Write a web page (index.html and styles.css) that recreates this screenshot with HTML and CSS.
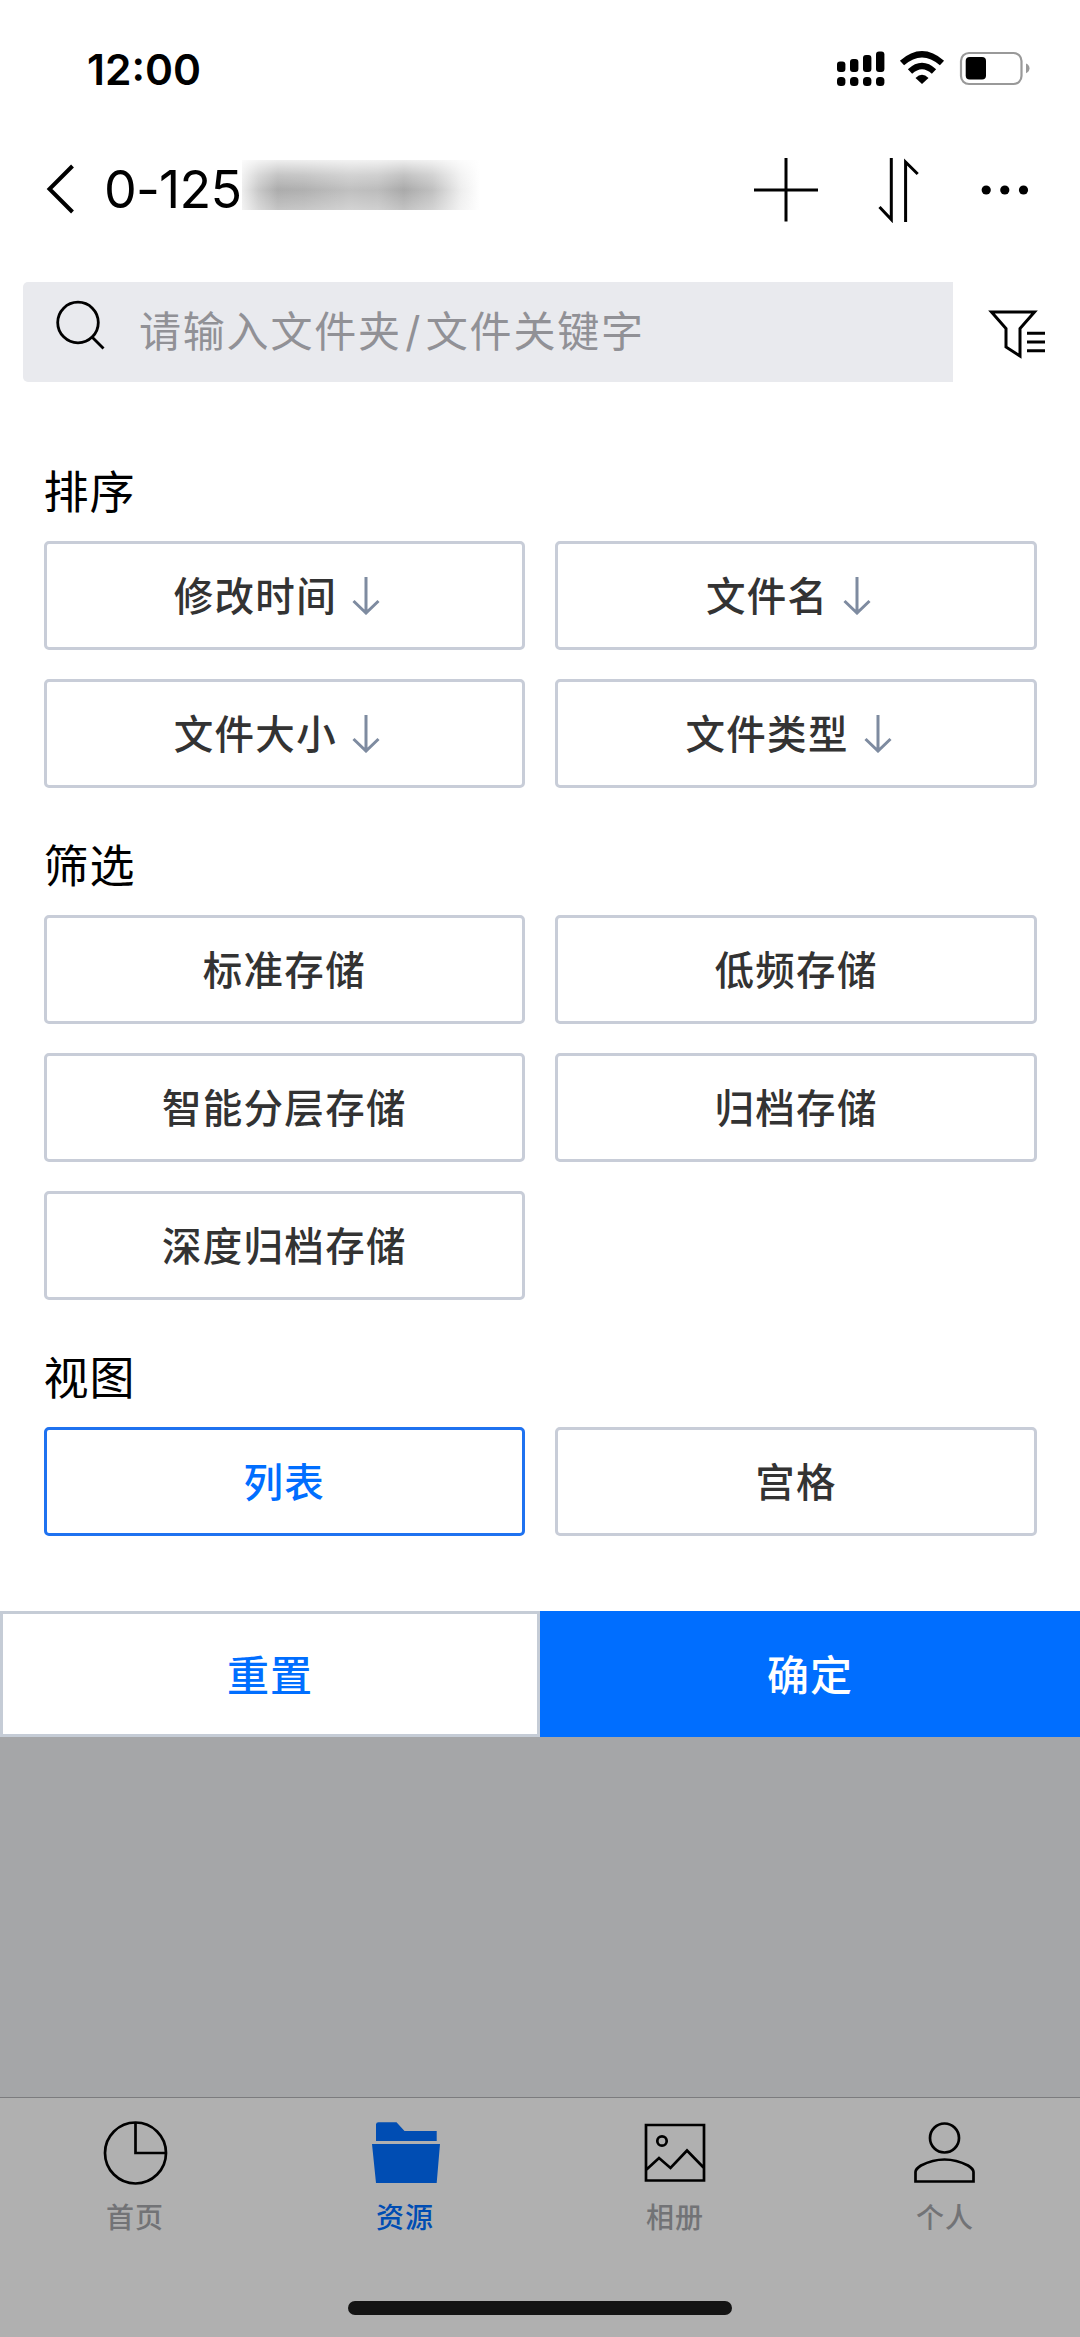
FILE: index.html
```html
<!DOCTYPE html>
<html lang="zh-CN">
<head>
    <meta charset="UTF-8">
    <meta name="viewport" content="width=device-width, initial-scale=1.0">
    <title>资源 - 筛选</title>
    <link rel="stylesheet" href="styles.css">
</head>
<body>
    <div class="screen">
        <!-- status bar -->
        <div class="status-bar">
            <span class="time">12:00</span>
            <svg class="status-icons" width="194" height="38" viewBox="836 50 194 38">
                <rect x="837" y="61.5" width="8.4" height="10.5" rx="3"/>
                <rect x="850" y="59" width="8.4" height="13" rx="3"/>
                <rect x="863" y="55" width="8.4" height="17" rx="3"/>
                <rect x="876" y="51.5" width="8.4" height="20.5" rx="3"/>
                <rect x="837" y="77" width="8.4" height="9" rx="3.5"/>
                <rect x="850" y="77" width="8.4" height="9" rx="3.5"/>
                <rect x="863" y="77" width="8.4" height="9" rx="3.5"/>
                <rect x="876" y="77" width="8.4" height="9" rx="3.5"/>
                <path d="M902 63Q922 45.5 942 63M910 71.5Q922 60.5 934 71.5" fill="none" stroke="#000" stroke-width="6.3"/>
                <path d="M915.5 78Q922 71.5 928.5 78L922 84Z"/>
                <rect x="961" y="53" width="60.5" height="31" rx="8" fill="none" stroke="#999" stroke-width="2.2"/>
                <rect x="965.7" y="57" width="20.3" height="22.5" rx="4"/>
                <path d="M1026 63.5Q1029.5 65 1029.5 68.3Q1029.5 71.7 1026 73.2Z" fill="#999"/>
            </svg>
        </div>

        <!-- nav -->
        <div class="nav">
            <svg class="back" width="30" height="50" viewBox="0 0 30 50"><path d="M26.5 2L3.5 25L26.5 48"/></svg>
            <h1 class="nav-title">0-125</h1>
            <span class="masked"></span>
            <svg class="nav-icons" width="276" height="66" viewBox="753 157 276 66">
                <path d="M754 190H818M786 158V221.5"/>
                <path d="M891.3 158V219.5L879.5 207M905.6 222V162L917.7 174"/>
                <g class="dots">
                    <circle cx="986.2" cy="190" r="4.6"/>
                    <circle cx="1004.8" cy="190" r="4.6"/>
                    <circle cx="1023.5" cy="190" r="4.6"/>
                </g>
            </svg>
        </div>

        <!-- search -->
        <div class="search-row">
            <div class="search-box">
                <svg width="50" height="50" viewBox="0 0 50 50"><circle cx="23" cy="22.5" r="20.3"/><path d="M37.5 37.5L48.5 48.5"/></svg>
                <span class="placeholder">请输入文件夹<i>/</i>文件关键字</span>
            </div>
            <svg class="filter-icon" width="60" height="52" viewBox="987 308 60 52">
                <path d="M991.5 312H1034.5L1020 328.5V356L1006 347V328.5Z"/>
                <path d="M1027 333.3H1045M1027 342H1045M1027 350.7H1045"/>
            </svg>
        </div>

        <!-- filter panel -->
        <div class="panel">
            <h2>排序</h2>
            <div class="options">
                <button>修改时间<svg class="arrow" viewBox="0 0 28 38"><path d="M14 0V35M1.5 24L14 36L26.5 24"/></svg></button>
                <button>文件名<svg class="arrow" viewBox="0 0 28 38"><path d="M14 0V35M1.5 24L14 36L26.5 24"/></svg></button>
                <button>文件大小<svg class="arrow" viewBox="0 0 28 38"><path d="M14 0V35M1.5 24L14 36L26.5 24"/></svg></button>
                <button>文件类型<svg class="arrow" viewBox="0 0 28 38"><path d="M14 0V35M1.5 24L14 36L26.5 24"/></svg></button>
            </div>

            <h2>筛选</h2>
            <div class="options">
                <button>标准存储</button>
                <button>低频存储</button>
                <button>智能分层存储</button>
                <button>归档存储</button>
                <button>深度归档存储</button>
            </div>

            <h2>视图</h2>
            <div class="options">
                <button class="active">列表</button>
                <button>宫格</button>
            </div>
        </div>

        <div class="actions">
            <button class="reset">重置</button>
            <button class="confirm">确定</button>
        </div>

        <div class="mask"></div>

        <!-- tab bar -->
        <div class="tab-bar">
            <div class="tabs">
                <div class="tab">
                    <svg width="70" height="70" viewBox="0 0 70 70"><circle cx="35.5" cy="35" r="30.5"/><path d="M35.5 4V35H66"/></svg>
                    <span>首页</span>
                </div>
                <div class="tab current">
                    <svg width="70" height="70" viewBox="0 0 70 70"><path d="M6 23V6.5Q6 4.3 8.5 4.3H26.5L34.5 13H66.7V23ZM2 26H70L66.7 65H6Z"/></svg>
                    <span>资源</span>
                </div>
                <div class="tab">
                    <svg width="70" height="70" viewBox="0 0 70 70"><path d="M6 7H64V62.5H6ZM6 52L19 40L30.5 50L47 32.5L64 50"/><circle cx="22" cy="23" r="4.7"/></svg>
                    <span>相册</span>
                </div>
                <div class="tab">
                    <svg width="70" height="70" viewBox="0 0 70 70"><circle cx="34.5" cy="20" r="14.5"/><path d="M5.5 63.5V54Q5.5 51 11 47.5Q34.500 35.500 58 47.500Q63.500 51 63.500 54V63.500Z"/></svg>
                    <span>个人</span>
                </div>
            </div>
            <div class="home-indicator"></div>
        </div>
    </div>
</body>
</html>
```
FILE: styles.css
```css
* {
    box-sizing: border-box;
}
body {
    margin: 0;
    background: #fff;
    font-family: Inter, "Noto Sans CJK SC", sans-serif;
    color: #000;
}
h1, h2 {
    margin: 0;
    font-weight: 400;
}
button {
    font-family: inherit;
    padding: 0;
    margin: 0;
}
svg {
    display: block;
    flex-shrink: 0;
}
.screen {
    width: 1080px;
    height: 2337px;
    display: flex;
    flex-direction: column;
    overflow: hidden;
}

/* status bar */
.status-bar {
    height: 138px;
    padding: 0 50px 0 87px;
    display: flex;
    align-items: center;
    justify-content: space-between;
}
.time {
    font-size: 42.5px;
    font-weight: 600;
}

/* nav */
.nav {
    height: 104px;
    display: flex;
    align-items: center;
    padding: 0 51px 0 46px;
}
.back, .nav-icons {
    fill: none;
    stroke: #000;
}
.back {
    stroke-width: 4;
    margin-bottom: 2px;
}
.nav-title {
    width: 138px;
    margin-left: 28px;
    font-size: 52px;
    line-height: 60px;
    letter-spacing: -0.8px;
    white-space: nowrap;
}
.masked {
    width: 238px;
    height: 50px;
    margin-bottom: 10px;
    background:
        linear-gradient(rgba(255, 255, 255, 0.8), rgba(255, 255, 255, 0.3) 30%, rgba(255, 255, 255, 0) 60%, rgba(255, 255, 255, 0.3)),
        linear-gradient(to right, #eee, #c8c8c8 7%, #acacac 15%, #b0b0b0 26%, #c0c0c0 45%, #bcbcbc 57%, #a9a9a9 68%, #c0c0c0 80%, #eee 92%, #fff);
}
.nav-icons {
    margin-left: auto;
    stroke-width: 3;
}
.dots {
    fill: #000;
    stroke: none;
}

/* search */
.search-row {
    display: flex;
    align-items: center;
    margin-top: 40px;
    padding: 0 33px 0 23px;
    justify-content: space-between;
}
.search-box {
    width: 930px;
    height: 100px;
    display: flex;
    align-items: center;
    padding-left: 32px;
    background: #e9eaee;
    border-radius: 5px 0 0 5px;
}
.search-box svg {
    fill: none;
    stroke: #000;
    stroke-width: 2.8;
    margin-top: -14px;
}
.placeholder {
    margin-left: 34px;
    font-size: 42px;
    letter-spacing: 1.8px;
    line-height: 60px;
    color: #919196;
}
.placeholder i {
    display: inline-block;
    width: 24px;
    font-style: normal;
    text-align: center;
}
.filter-icon {
    fill: none;
    stroke: #000;
    stroke-width: 3;
    margin-top: 4px;
}

/* filter panel */
.panel {
    height: 1229px;
    padding: 81px 43px 0 43.5px;
}
.panel h2 {
    font-size: 45px;
    letter-spacing: 1px;
    line-height: 60px;
    margin-bottom: 18px;
}
.options {
    display: grid;
    grid-template-columns: 1fr 1fr;
    gap: 29.5px 30px;
    margin-bottom: 49.5px;
}
.options button {
    height: 108.5px;
    display: flex;
    align-items: center;
    justify-content: center;
    padding-bottom: 3px;
    background: #fff;
    border: 3px solid #c8cdd8;
    border-radius: 5px;
    color: #333;
    font-size: 39.5px;
    font-weight: 500;
    letter-spacing: 1.3px;
}
.options button.active {
    border-color: #1f72f0;
    color: #006eff;
}
.arrow {
    width: 28px;
    height: 38px;
    margin: 4px 15px 0;
    fill: none;
    stroke: #7e8ba0;
    stroke-width: 3;
}

.actions {
    display: flex;
    height: 126px;
}
.actions button {
    width: 540px;
    padding-bottom: 4px;
    border: none;
    font-size: 42px;
    font-weight: 500;
    letter-spacing: 1px;
}
.actions .reset {
    background: #fff;
    border: 3px solid #c5ccd6;
    color: #006eff;
}
.actions .confirm {
    background: #006eff;
    color: #fff;
}

.mask {
    height: 360px;
    background: #a5a6a8;
}

/* tab bar */
.tab-bar {
    flex: 1;
    background: #b0b0b0;
    border-top: 1px solid #7c7c7e;
}
.tabs {
    display: grid;
    grid-template-columns: repeat(4, 1fr);
    height: 203px;
    padding-top: 20px;
}
.tab {
    display: flex;
    flex-direction: column;
    align-items: center;
    font-size: 28px;
    font-weight: 500;
    line-height: 40px;
    letter-spacing: 1px;
    color: #727376;
}
.tab svg {
    fill: none;
    stroke: #000;
    stroke-width: 2.7;
    margin-bottom: 10px;
}
.tab.current {
    color: #004db3;
}
.tab.current svg {
    fill: #004db3;
    stroke: none;
}
.home-indicator {
    width: 384px;
    height: 14px;
    margin: 0 auto;
    border-radius: 7px;
    background: #141414;
}
```
